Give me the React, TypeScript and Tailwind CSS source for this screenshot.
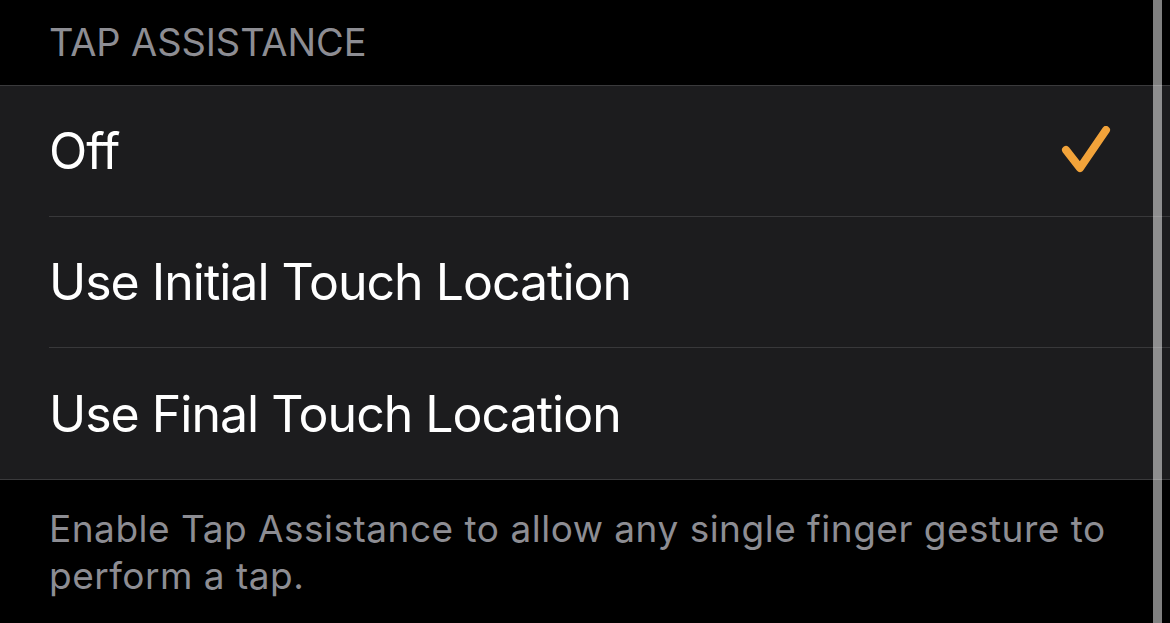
const options = [
  { label: "Off", selected: true },
  { label: "Use Initial Touch Location", selected: false },
  { label: "Use Final Touch Location", selected: false },
];

function Check() {
  return (
    <svg width="52" height="50" viewBox="0 0 52 50" fill="none" className="shrink-0">
      <polyline
        points="6,24 20,42 46,4"
        stroke="#f2a33a"
        strokeWidth="8"
        strokeLinecap="round"
        strokeLinejoin="round"
      />
    </svg>
  );
}

export default function App() {
  return (
    <div
      className="relative w-[1170px] h-[623px] overflow-hidden bg-black"
      style={{ fontFamily: "Inter, 'Noto Sans', sans-serif" }}
    >
      {/* Section header */}
      <div className="h-[85px] pl-[49px] pt-[20px] text-[38px] leading-[44px] text-[#8d8d93] tracking-[-0.1px]">
        TAP ASSISTANCE
      </div>

      {/* Options */}
      <div className="border-y border-[#3a3a3c] bg-[#1c1c1e]">
        {options.map((o, i) => (
          <div key={o.label} className="pl-[49px]">
            <div
              className={
                "flex h-[131px] items-center justify-between pr-[58px] " +
                (i < options.length - 1 ? "border-b border-[#38383a]" : "")
              }
            >
              <span className="text-[50px] leading-none text-white tracking-[-1px]">{o.label}</span>
              {o.selected && <Check />}
            </div>
          </div>
        ))}
      </div>

      {/* Footer */}
      <p className="pl-[49px] pr-[50px] pt-[25px] text-[37px] leading-[47px] text-[#8d8d93] tracking-[0.5px]">
        Enable Tap Assistance to allow any single finger gesture to perform a tap.
      </p>

      {/* Scroll indicator */}
      <div className="absolute top-0 bottom-0 left-[1153px] w-[9px] bg-white/50" />
    </div>
  );
}
